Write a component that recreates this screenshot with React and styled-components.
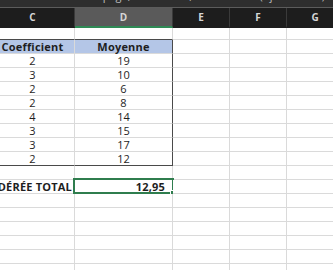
import React from "react";
import styled, { createGlobalStyle } from "styled-components";

const Global = createGlobalStyle`
  html, body { margin: 0; padding: 0; background: #ffffff; overflow: hidden; }
  body { font-family: "Open Sans", "Noto Sans", sans-serif; }
`;

const Page = styled.div`
  width: 333px;
  height: 270px;
  overflow: hidden;
  background: #fff;
`;

const TopStrip = styled.div`
  height: 7px;
  background: #2e2e2e;
  border-bottom: 1px solid #5c5c5c;
  overflow: hidden;
  color: #bdbdbd;
  font-size: 11px;
  line-height: 11px;
  white-space: nowrap;
`;

const StripText = styled.div`
  margin-top: -10px;
  padding-left: 44px;
  word-spacing: 8px;
`;

const Sheet = styled.div`
  margin-left: -9px;
  display: grid;
  grid-template-columns: 84px 98px 57px 57px 57px;
`;

const ColHead = styled.div`
  box-sizing: border-box;
  height: 20px;
  display: flex;
  align-items: center;
  justify-content: center;
  font-size: 10px;
  font-weight: 700;
  color: #d6d6d6;
  background: ${(p) => (p.$active ? "#5a5a5a" : "#1d1d1d")};
  border-right: 1px solid #3a3a3a;
  border-bottom: 2px solid ${(p) => (p.$active ? "#2f8a55" : "#1d1d1d")};
`;

const Cell = styled.div`
  box-sizing: border-box;
  position: relative;
  height: ${(p) => p.$h || 14}px;
  display: flex;
  align-items: center;
  justify-content: ${(p) => p.$align || "center"};
  padding: 0 ${(p) => (p.$align === "flex-end" ? 7 : 0)}px;
  font-size: 11px;
  font-weight: ${(p) => (p.$bold ? 700 : 400)};
  letter-spacing: ${(p) => (p.$bold ? "0.2px" : "0")};
  color: #1e1e1e;
  white-space: nowrap;
  background: ${(p) => p.$bg || "#fff"};
  border-right: 1px solid ${(p) => (p.$darkRight ? "#4a4a4a" : "#dadada")};
  border-bottom: 1px solid ${(p) => (p.$darkBottom ? "#4a4a4a" : "#dadada")};
  z-index: ${(p) => (p.$over ? 0 : 1)};
`;

const Selection = styled.div`
  position: absolute;
  left: -2px;
  top: -2px;
  right: -2px;
  bottom: -1px;
  border: 2px solid #2f7d4e;
  pointer-events: none;
`;

const Handle = styled.div`
  position: absolute;
  right: -4px;
  bottom: -4px;
  width: 4px;
  height: 4px;
  background: #2f7d4e;
  border: 1px solid #fff;
`;

const coef = [2, 3, 2, 2, 4, 3, 3, 2];
const moy = [19, 10, 6, 8, 14, 15, 17, 12];

function EmptyRow({ h, darkCD }) {
  return (
    <>
      <Cell $h={h} $darkBottom={darkCD} />
      <Cell $h={h} $darkBottom={darkCD} />
      <Cell $h={h} />
      <Cell $h={h} />
      <Cell $h={h} />
    </>
  );
}

export default function App() {
  return (
    <Page>
      <Global />
      <TopStrip>
        <StripText>Mise en page, Formules, Données (Ajustement) ; Affichage, Aperçu</StripText>
      </TopStrip>
      <Sheet>
        <ColHead>C</ColHead>
        <ColHead $active>D</ColHead>
        <ColHead>E</ColHead>
        <ColHead>F</ColHead>
        <ColHead>G</ColHead>

        <EmptyRow h={12} darkCD />

        <Cell $bg="#b4c6e7" $bold>Coefficient</Cell>
        <Cell $bg="#b4c6e7" $bold $darkRight>Moyenne</Cell>
        <Cell />
        <Cell />
        <Cell />

        {coef.map((c, i) => (
          <React.Fragment key={i}>
            <Cell $darkBottom={i === coef.length - 1}>{c}</Cell>
            <Cell $darkBottom={i === coef.length - 1} $darkRight>{moy[i]}</Cell>
            <Cell />
            <Cell />
            <Cell />
          </React.Fragment>
        ))}

        <EmptyRow />

        <Cell $align="flex-end" $bold $over style={{ paddingRight: 2 }}>MOYENNE PONDÉRÉE TOTAL</Cell>
        <Cell $align="flex-end" $bold>
          12,95
          <Selection>
            <Handle />
          </Selection>
        </Cell>
        <Cell />
        <Cell />
        <Cell />

        <EmptyRow />
        <EmptyRow />
        <EmptyRow />
        <EmptyRow />
        <EmptyRow />
        <EmptyRow />
      </Sheet>
    </Page>
  );
}
